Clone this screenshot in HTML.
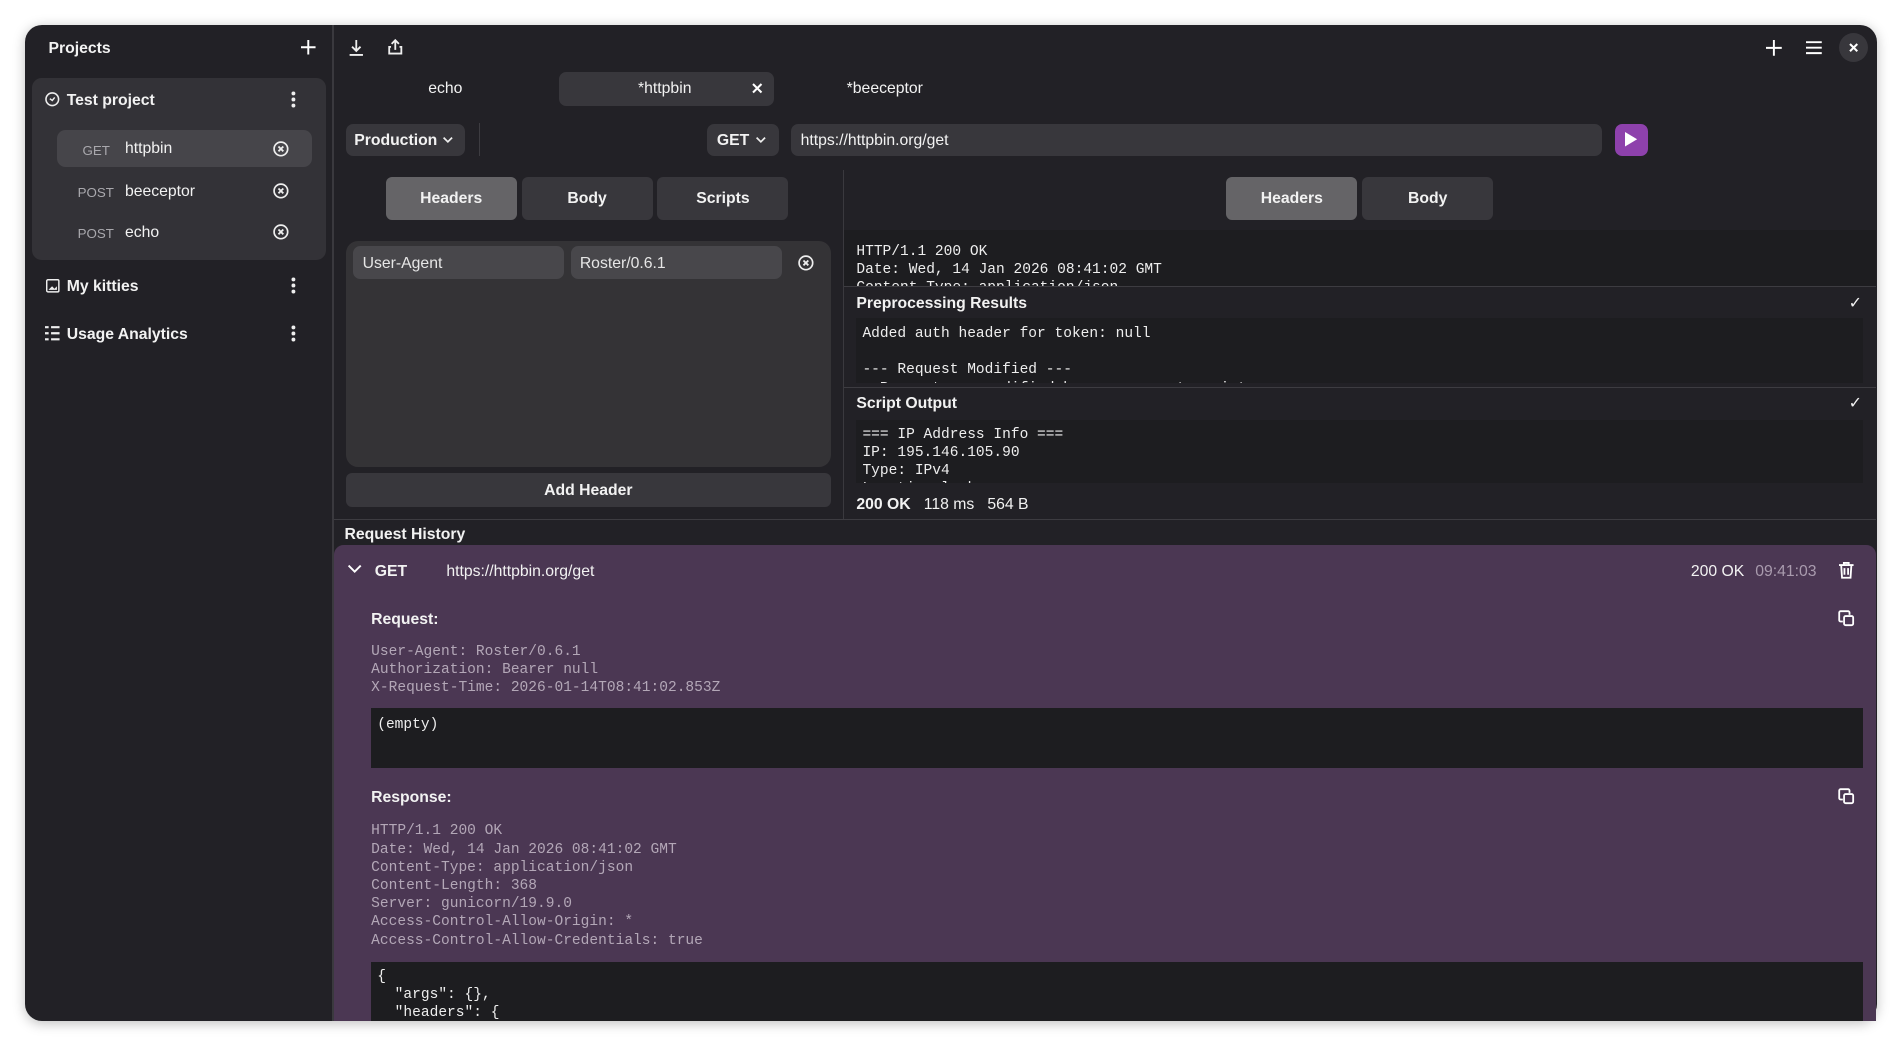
<!DOCTYPE html>
<html><head><meta charset="utf-8"><style>
html,body{margin:0;padding:0;width:1902px;height:1047px;overflow:hidden;background:#fff}
#w{zoom:1.2130;position:relative;width:1568px;height:863px;font-family:"Liberation Sans",sans-serif;color:#f2f2f2;font-size:13px}
.a{position:absolute}
.win{left:21px;top:21px;width:1526px;height:821px;background:#222126;border-radius:14px;overflow:hidden;box-shadow:0 2px 10px rgba(0,0,0,.25)}
.b{font-weight:bold}
.t{line-height:16px;white-space:nowrap;margin-top:1px}
.mono{font-family:"Liberation Mono",monospace;font-size:12px;line-height:15px;white-space:pre;margin-top:1px}
.btn{background:#38373c;border-radius:6px}
.tab{background:#38373c;border-radius:5px;text-align:center;line-height:36px;font-weight:bold;font-size:13px}
.on{background:#656467}
svg{position:absolute;overflow:visible}
</style></head><body><div id="w">
<div class="a win"></div>
<div class="a" style="left:274px;top:21px;width:1px;height:821px;background:#3a393e"></div>
<div class="a t b" style="left:40px;top:31px">Projects</div>
<svg style="left:248px;top:33px" width="12" height="12"><path d="M6 0V12M0 6H12" stroke="#fff" stroke-width="1.6"/></svg>
<div class="a" style="left:26px;top:64px;width:243px;height:150px;background:#333237;border-radius:8px"></div>
<svg style="left:37px;top:76px" width="12" height="12"><circle cx="6" cy="6" r="5.2" fill="none" stroke="#eee" stroke-width="1.3"/><path d="M4 5.5L6 7L8 4.5" fill="none" stroke="#eee" stroke-width="1.2"/></svg>
<div class="a t b" style="left:55px;top:74px">Test project</div>
<svg style="left:240px;top:75px" width="4" height="14"><circle cx="2" cy="2" r="1.6" fill="#eee"/><circle cx="2" cy="7" r="1.6" fill="#eee"/><circle cx="2" cy="12" r="1.6" fill="#eee"/></svg>
<div class="a" style="left:47px;top:107px;width:210px;height:31px;background:#46454a;border-radius:7px"></div>
<div class="a t" style="left:68px;top:115px;font-size:11px;color:#a9a8ad">GET</div>
<div class="a t" style="left:103px;top:114px">httpbin</div>
<div class="a t" style="left:64px;top:150px;font-size:11px;color:#a9a8ad">POST</div>
<div class="a t" style="left:103px;top:149px">beeceptor</div>
<div class="a t" style="left:64px;top:184px;font-size:11px;color:#a9a8ad">POST</div>
<div class="a t" style="left:103px;top:183px">echo</div>
<svg style="left:225px;top:116px" width="13" height="13"><circle cx="6.5" cy="6.5" r="5.6" fill="none" stroke="#eee" stroke-width="1.4"/><path d="M4.5 4.5L8.5 8.5M8.5 4.5L4.5 8.5" stroke="#eee" stroke-width="1.5"/></svg>
<svg style="left:225px;top:151px" width="13" height="13"><circle cx="6.5" cy="6.5" r="5.6" fill="none" stroke="#eee" stroke-width="1.4"/><path d="M4.5 4.5L8.5 8.5M8.5 4.5L4.5 8.5" stroke="#eee" stroke-width="1.5"/></svg>
<svg style="left:225px;top:185px" width="13" height="13"><circle cx="6.5" cy="6.5" r="5.6" fill="none" stroke="#eee" stroke-width="1.4"/><path d="M4.5 4.5L8.5 8.5M8.5 4.5L4.5 8.5" stroke="#eee" stroke-width="1.5"/></svg>
<svg style="left:38px;top:230px" width="11" height="11"><rect x=".6" y=".6" width="10" height="10" rx="1" fill="none" stroke="#eee" stroke-width="1.2"/><path d="M2 9L5 6L7 8L9 6V9Z" fill="#eee"/></svg>
<div class="a t b" style="left:55px;top:227px">My kitties</div>
<svg style="left:240px;top:228px" width="4" height="14"><circle cx="2" cy="2" r="1.6" fill="#eee"/><circle cx="2" cy="7" r="1.6" fill="#eee"/><circle cx="2" cy="12" r="1.6" fill="#eee"/></svg>
<svg style="left:37px;top:269px" width="12" height="12"><path d="M0 1H3M5 1H12M0 6H3M5 6H12M0 11H3M5 11H12" stroke="#eee" stroke-width="1.8"/></svg>
<div class="a t b" style="left:55px;top:267px">Usage Analytics</div>
<svg style="left:240px;top:268px" width="4" height="14"><circle cx="2" cy="2" r="1.6" fill="#eee"/><circle cx="2" cy="7" r="1.6" fill="#eee"/><circle cx="2" cy="12" r="1.6" fill="#eee"/></svg>

<svg style="left:288px;top:33px" width="12" height="13"><path d="M6 0V9M2.5 5.5L6 9L9.5 5.5M0.5 12.3H11.5" fill="none" stroke="#eee" stroke-width="1.5"/></svg>
<svg style="left:320px;top:32px" width="12" height="13"><path d="M6 9V1M3 4L6 1L9 4M2.5 6.5H1V12H11V6.5H9.5" fill="none" stroke="#eee" stroke-width="1.5"/></svg>
<svg style="left:1456px;top:33px" width="13" height="13"><path d="M6.5 0V13M0 6.5H13" stroke="#fff" stroke-width="1.6"/></svg>
<svg style="left:1489px;top:34px" width="13" height="11"><path d="M0 1H13M0 5.5H13M0 10H13" stroke="#fff" stroke-width="1.6"/></svg>
<div class="a" style="left:1516px;top:27px;width:24px;height:24px;border-radius:12px;background:#38373c"></div>
<svg style="left:1525px;top:36px" width="6" height="6"><path d="M0 0L6 6M6 0L0 6" stroke="#fff" stroke-width="1.7"/></svg>

<div class="a t" style="left:353px;top:64px">echo</div>
<div class="a" style="left:461px;top:59px;width:177px;height:28px;background:#38373c;border-radius:6px"></div>
<div class="a t" style="left:526px;top:64px">*httpbin</div>
<svg style="left:621px;top:69px" width="7" height="7"><path d="M0 0L7 7M7 0L0 7" stroke="#fff" stroke-width="1.7"/></svg>
<div class="a t" style="left:698px;top:64px">*beeceptor</div>

<div class="a btn" style="left:285px;top:102px;width:98px;height:27px"></div>
<div class="a t b" style="left:292px;top:107px">Production</div>
<svg style="left:365px;top:113px" width="8" height="5"><path d="M.5 .5L4 4L7.5 .5" fill="none" stroke="#eee" stroke-width="1.4"/></svg>
<div class="a" style="left:395px;top:101px;width:1px;height:28px;background:#3d3c41"></div>
<div class="a btn" style="left:583px;top:102px;width:59px;height:27px"></div>
<div class="a t b" style="left:591px;top:107px">GET</div>
<svg style="left:623px;top:113px" width="8" height="5"><path d="M.5 .5L4 4L7.5 .5" fill="none" stroke="#eee" stroke-width="1.4"/></svg>
<div class="a btn" style="left:652px;top:102px;width:669px;height:27px"></div>
<div class="a t" style="left:660px;top:107px">https://httpbin.org/get</div>
<div class="a" style="left:1331px;top:102px;width:28px;height:27px;background:#8e41ac;border-radius:6px"></div>
<svg style="left:1340px;top:109px" width="11" height="12"><path d="M0 0L10 6L0 12Z" fill="#fff"/></svg>

<div class="a tab on" style="left:318px;top:146px;width:108px;height:35px">Headers</div>
<div class="a tab" style="left:430px;top:146px;width:108px;height:35px">Body</div>
<div class="a tab" style="left:542px;top:146px;width:108px;height:35px">Scripts</div>
<div class="a" style="left:285px;top:199px;width:400px;height:186px;background:#343336;border-radius:10px"></div>
<div class="a" style="left:291px;top:203px;width:174px;height:27px;background:#48474b;border-radius:6px"></div>
<div class="a t" style="left:299px;top:208px;color:#e6e6e6">User-Agent</div>
<div class="a" style="left:471px;top:203px;width:174px;height:27px;background:#48474b;border-radius:6px"></div>
<div class="a t" style="left:478px;top:208px;color:#e6e6e6">Roster/0.6.1</div>
<svg style="left:658px;top:210px" width="13" height="13"><circle cx="6.5" cy="6.5" r="5.6" fill="none" stroke="#eee" stroke-width="1.4"/><path d="M4.5 4.5L8.5 8.5M8.5 4.5L4.5 8.5" stroke="#eee" stroke-width="1.5"/></svg>
<div class="a tab" style="left:285px;top:390px;width:400px;height:28px;line-height:29px">Add Header</div>
<div class="a" style="left:695px;top:140px;width:1px;height:288px;background:#3a393e"></div>

<div class="a tab on" style="left:1011px;top:146px;width:108px;height:35px">Headers</div>
<div class="a tab" style="left:1123px;top:146px;width:108px;height:35px">Body</div>
<div class="a" style="left:696px;top:190px;width:851px;height:46px;background:#1d1d20;overflow:hidden"><div class="mono" style="position:absolute;left:10px;top:9px;color:#eee">HTTP/1.1 200 OK
Date: Wed, 14 Jan 2026 08:41:02 GMT
Content-Type: application/json</div></div>
<div class="a" style="left:696px;top:236px;width:851px;height:1px;background:#3d3c41"></div>
<div class="a t b" style="left:706px;top:241px">Preprocessing Results</div>
<div class="a t" style="left:1524px;top:241px">✓</div>
<div class="a" style="left:706px;top:262px;width:830px;height:54px;background:#1d1d20;overflow:hidden"><div class="mono" style="position:absolute;left:5px;top:5px;color:#eee">Added auth header for token: null

--- Request Modified ---
  Request was modified by pre-request script</div></div>
<div class="a" style="left:696px;top:319px;width:851px;height:1px;background:#3d3c41"></div>
<div class="a t b" style="left:706px;top:324px">Script Output</div>
<div class="a t" style="left:1524px;top:324px">✓</div>
<div class="a" style="left:706px;top:346px;width:830px;height:52px;background:#1d1d20;overflow:hidden"><div class="mono" style="position:absolute;left:5px;top:4px;color:#eee">=== IP Address Info ===
IP: 195.146.105.90
Type: IPv4
Location lookup ...</div></div>
<div class="a t" style="left:706px;top:407px"><b>200 OK</b>&nbsp;&nbsp; 118 ms&nbsp;&nbsp; 564 B</div>
<div class="a" style="left:275px;top:428px;width:1272px;height:1px;background:#3d3c41"></div>

<div class="a t b" style="left:284px;top:432px">Request History</div>
<div class="a" style="left:275px;top:449px;width:1272px;height:393px;background:#4b3753;border-radius:8px 8px 0 0;overflow:hidden">
<svg style="left:12px;top:17px" width="11" height="7"><path d="M.5 .5L5.5 5.5L10.5 .5" fill="none" stroke="#fff" stroke-width="1.6"/></svg>
<div class="a t b" style="left:34px;top:13px">GET</div>
<div class="a t" style="left:93px;top:13px">https://httpbin.org/get</div>
<div class="a t" style="left:1119px;top:13px">200 OK</div>
<div class="a t" style="left:1172px;top:13px;color:#a99bae">09:41:03</div>
<svg style="left:1241px;top:14px" width="12" height="14"><path d="M0 2.5H12M4 2.5V.8H8V2.5M1.8 2.5L2.5 13H9.5L10.2 2.5M4.5 5V10.5M7.5 5V10.5" fill="none" stroke="#fff" stroke-width="1.5"/></svg>
<div class="a t b" style="left:31px;top:53px">Request:</div>
<svg style="left:1240px;top:54px" width="14" height="14"><path d="M4 9.5H2.2A1.2 1.2 0 0 1 1 8.3V2.2A1.2 1.2 0 0 1 2.2 1H8.3A1.2 1.2 0 0 1 9.5 2.2V4" fill="none" stroke="#fff" stroke-width="1.5"/><rect x="5" y="5" width="7.5" height="7.5" rx="1.3" fill="none" stroke="#fff" stroke-width="1.5"/></svg>
<div class="a mono" style="left:31px;top:80px;color:#b3a7b7">User-Agent: Roster/0.6.1
Authorization: Bearer null
X-Request-Time: 2026-01-14T08:41:02.853Z</div>
<div class="a" style="left:31px;top:135px;width:1230px;height:49px;background:#1d1d20"><div class="mono" style="position:absolute;left:5px;top:5px;color:#eee">(empty)</div></div>
<div class="a t b" style="left:31px;top:200px">Response:</div>
<svg style="left:1240px;top:201px" width="14" height="14"><path d="M4 9.5H2.2A1.2 1.2 0 0 1 1 8.3V2.2A1.2 1.2 0 0 1 2.2 1H8.3A1.2 1.2 0 0 1 9.5 2.2V4" fill="none" stroke="#fff" stroke-width="1.5"/><rect x="5" y="5" width="7.5" height="7.5" rx="1.3" fill="none" stroke="#fff" stroke-width="1.5"/></svg>
<div class="a mono" style="left:31px;top:228px;color:#b3a7b7">HTTP/1.1 200 OK
Date: Wed, 14 Jan 2026 08:41:02 GMT
Content-Type: application/json
Content-Length: 368
Server: gunicorn/19.9.0
Access-Control-Allow-Origin: *
Access-Control-Allow-Credentials: true</div>
<div class="a" style="left:31px;top:344px;width:1230px;height:60px;background:#1d1d20"><div class="mono" style="position:absolute;left:5px;top:4px;color:#eee">{
  "args": {},
  "headers": {</div></div>
</div>
</div></body></html>
